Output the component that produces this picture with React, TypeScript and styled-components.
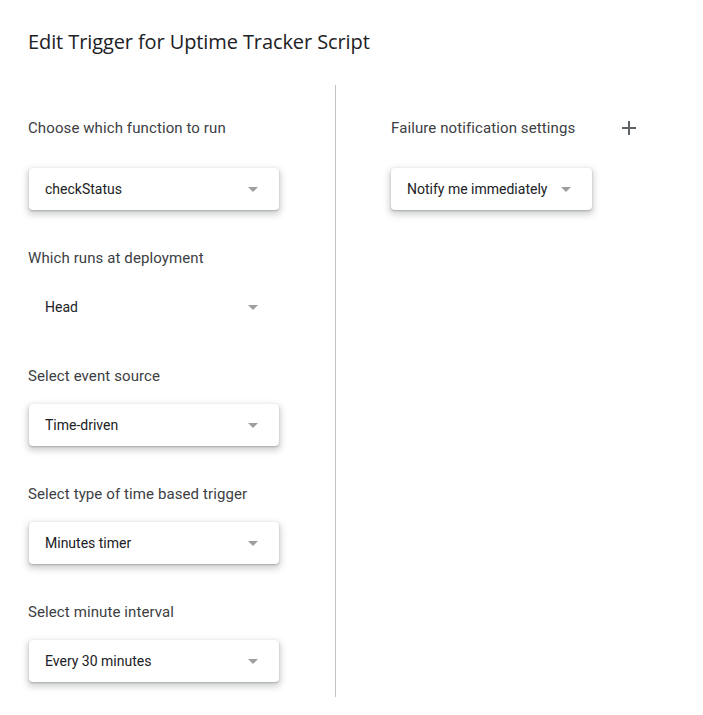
import React from "react";
import styled, { createGlobalStyle } from "styled-components";

const Global = createGlobalStyle`
  html, body { margin: 0; padding: 0; background: #fff; }
  body { font-family: Roboto, "Liberation Sans", Arial, sans-serif; color: #3c4043; }
`;

const Page = styled.div`
  width: 703px;
  height: 715px;
  box-sizing: border-box;
  padding: 29px 0 0 28px;
  overflow: hidden;
`;

const Title = styled.h1`
  margin: 0;
  font-family: "Open Sans", Roboto, sans-serif;
  font-weight: 400;
  font-size: 20px;
  line-height: 26px;
  color: #202124;
  letter-spacing: -0.1px;
`;

const Columns = styled.div`
  display: flex;
  margin-top: 30px;
`;

const LeftCol = styled.div`
  width: 308px;
  box-sizing: border-box;
  padding: 33px 0 15px 0;
  border-right: 1px solid #c4c4c4;
  display: flex;
  flex-direction: column;
  gap: 38px;
`;

const RightCol = styled.div`
  padding: 33px 0 0 55px;
  display: flex;
  flex-direction: column;
`;

const Field = styled.div<{ $gap: number }>`
  display: flex;
  flex-direction: column;
  gap: ${(p) => p.$gap}px;
`;

const LabelRow = styled.div`
  display: flex;
  align-items: center;
  height: 20px;
`;

const Label = styled.div`
  font-size: 15px;
  line-height: 20px;
  letter-spacing: 0.1px;
  color: #3c4043;
`;

const PlusButton = styled.button`
  margin-left: 46px;
  border: 0;
  background: none;
  padding: 0;
  width: 16px;
  height: 16px;
  display: flex;
  align-items: center;
  justify-content: center;
  cursor: pointer;
`;

const Select = styled.div<{ $width: number; $flat?: boolean; $offset?: number }>`
  box-sizing: border-box;
  width: ${(p) => p.$width}px;
  height: 42px;
  margin-left: ${(p) => p.$offset ?? 1}px;
  padding: 0 21px 0 16px;
  display: flex;
  align-items: center;
  justify-content: space-between;
  border-radius: 4px;
  background: #fff;
  box-shadow: ${(p) =>
    p.$flat
      ? "none"
      : "0 1px 2px 0 rgba(60,64,67,0.3), 0 3px 6px 2px rgba(60,64,67,0.22)"};
`;

const SelectText = styled.span`
  font-size: 14px;
  color: #202124;
  white-space: nowrap;
`;

const Arrow = styled.span`
  width: 0;
  height: 0;
  border-left: 5px solid transparent;
  border-right: 5px solid transparent;
  border-top: 5px solid #9e9e9e;
  margin-top: 1px;
`;

const fields = [
  { label: "Choose which function to run", value: "checkStatus", gap: 30 },
  { label: "Which runs at deployment", value: "Head", gap: 18, flat: true },
  { label: "Select event source", value: "Time-driven", gap: 18 },
  { label: "Select type of time based trigger", value: "Minutes timer", gap: 18 },
  { label: "Select minute interval", value: "Every 30 minutes", gap: 18 },
];

export default function App() {
  return (
    <>
      <Global />
      <Page>
        <Title>Edit Trigger for Uptime Tracker Script</Title>
        <Columns>
          <LeftCol>
            {fields.map((f) => (
              <Field key={f.label} $gap={f.gap}>
                <LabelRow>
                  <Label>{f.label}</Label>
                </LabelRow>
                <Select $width={250} $flat={f.flat}>
                  <SelectText>{f.value}</SelectText>
                  <Arrow />
                </Select>
              </Field>
            ))}
          </LeftCol>
          <RightCol>
            <Field $gap={30}>
              <LabelRow>
                <Label>Failure notification settings</Label>
                <PlusButton aria-label="Add">
                  <svg width="14" height="14" viewBox="0 0 14 14">
                    <path d="M7 0v14M0 7h14" stroke="#5f6368" strokeWidth="2" />
                  </svg>
                </PlusButton>
              </LabelRow>
              <Select $width={201} $offset={0}>
                <SelectText>Notify me immediately</SelectText>
                <Arrow />
              </Select>
            </Field>
          </RightCol>
        </Columns>
      </Page>
    </>
  );
}
